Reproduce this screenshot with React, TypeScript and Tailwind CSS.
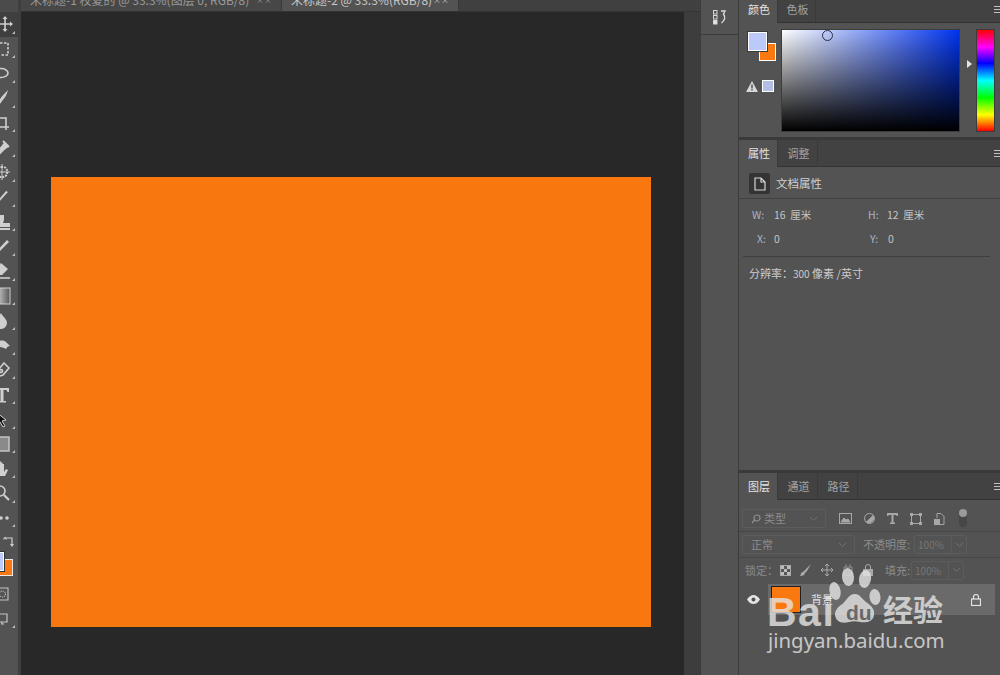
import React from "react";

const F = "font-['Noto_Sans_CJK_SC','Liberation_Sans',sans-serif]";

const Ic = ({ children, w = 18, h = 18, ml = -5 }: { children: React.ReactNode; w?: number; h?: number; ml?: number }) => (
  <svg width={w} height={h} viewBox="0 0 18 18" fill="none" stroke="#cfcfcf" strokeWidth="1.600" style={{ marginLeft: ml, flex: "none" }}>
    {children}
  </svg>
);

const tools: React.ReactNode[] = [
  <><path d="M9 2v14M2 9h14" /><path d="M9 1l2.500 3h-5zM9 17l2.500-3h-5zM1 9l3-2.500v5zM17 9l-3-2.500v5z" fill="#cfcfcf" stroke="none" /></>,
  <rect x="3" y="3" width="12" height="12" strokeDasharray="2.500 1.500" />,
  <><ellipse cx="8" cy="8" rx="7" ry="4.500" /><path d="M4 12l-1 4" /></>,
  <path d="M15 1C12 4 9 7 7 10c-3 0-5 2-5 6 3 0 6-1 7-4 3-3 5-7 6-11z" fill="#cfcfcf" stroke="none" />,
  <><path d="M4 1v12h12M1 4h12v12" /></>,
  <path d="M2 15l6-6 4-5 3 3-5 4-5 5zM10 2l6 6" fill="#cfcfcf" strokeWidth="2" />,
  <><rect x="4" y="4" width="10" height="10" rx="4" strokeDasharray="2 1" strokeWidth="2" /><path d="M9 1v16M1 9h16" strokeWidth="1" /></>,
  <path d="M2 16L13 3l2 1L4 16z" fill="#cfcfcf" stroke="none" />,
  <path d="M6 2h5v5l-1 3h7v4H1v-4h6L6 7zM1 15h16v2H1z" fill="#cfcfcf" stroke="none" />,
  <><path d="M2 15L14 2l2 2L5 15z" fill="#cfcfcf" stroke="none" /><path d="M2 4l6 6M3 17l4-1" strokeWidth="1" strokeDasharray="1 1" /></>,
  <><path d="M8 1l7 6-6 6H5L2 9z" fill="#cfcfcf" stroke="none" /><path d="M1 16h16" /></>,
  <rect x="1" y="1" width="16" height="16" fill="url(#grad)" stroke="#cfcfcf" strokeWidth="1" />,
  <path d="M8 1c2 4 6 6 6 10a6 6 0 0 1-12 0c0-4 4-6 6-10z" fill="#cfcfcf" stroke="none" />,
  <path d="M1 10c2-5 8-7 12-4l4 4c-2 0-3 1-4 3-3-2-8-2-12-3z" fill="#cfcfcf" stroke="none" />,
  <><path d="M11 2l5 5-6 7-6 2 1-7z" /><circle cx="8" cy="10" r="1.500" /></>,
  <path d="M2 2h14v4h-1.500l-1-2H10.500v11H13v1.500H5V15h2.500V4H4.500l-1 2H2z" fill="#cfcfcf" stroke="none" />,
  <path d="M3 2l10 8-4 1 3 5-2 1-3-5-3 3z" fill="#111" stroke="#cfcfcf" strokeWidth="1" />,
  <rect x="2" y="2" width="14" height="14" fill="#8a8a8a" stroke="#c4c4c4" strokeWidth="1.500" />,
  <path d="M5 16C3 13 2 10 1 8l2-1 2 3V3h1.500v5V1.500H8V8 2.500h1.500V9V4H11v8l2-3 2 1-3 6z" fill="#cfcfcf" stroke="none" />,
  <><circle cx="7" cy="7" r="5" /><path d="M11 11l5 5" strokeWidth="2.200" /></>,
  <g fill="#cfcfcf" stroke="none"><circle cx="2" cy="9" r="1.800" /><circle cx="8" cy="9" r="1.800" /><circle cx="14" cy="9" r="1.800" /></g>,
];

const Tool = ({ children, active, corner = true }: { children: React.ReactNode; active?: boolean; corner?: boolean }) => (
  <div className={`relative h-[24.700px] flex items-center shrink-0 ${active ? "bg-[#3f3f3f]" : ""}`}>
    {children}
    {corner && <div className="absolute right-[3px] bottom-[3px] w-0 h-0 border-l-[3px] border-l-transparent border-b-[3px] border-b-[#bdbdbd]" />}
  </div>
);

const Toolbar = () => (
  <div className="w-[18px] shrink-0 bg-[#535353] flex flex-col overflow-hidden relative">
    <div className="h-[12px] shrink-0 bg-[#4b4b4b]" />
    {tools.map((t, i) => (
      <Tool key={i} active={i === 0}>
        <Ic ml={i === 0 ? -4 : -7}>{t}</Ic>
      </Tool>
    ))}
    <div className="h-[19px] mt-[2px] shrink-0 flex items-center">
      <svg width="14" height="14" viewBox="0 0 14 14" fill="none" stroke="#cfcfcf" strokeWidth="1.200" className="ml-[2px]">
        <path d="M3 3h7v7M1.500 4.500L3 2.500l1.500 2M8.500 9L10 11l1.500-2" />
      </svg>
    </div>
    <div className="h-[30px] shrink-0 relative">
      <div className="absolute left-[-8px] top-[1px] w-[12px] h-[19px] bg-[#bccafa] border border-white z-10 outline outline-1 outline-[#333]" />
      <div className="absolute left-[-4px] top-[8px] w-[17px] h-[17px] bg-[#f9780f] border border-[#e8e8e8]" />
    </div>
    <div className="h-[24px] shrink-0 flex items-center mt-[1px]">
      <svg width="10" height="14" viewBox="0 0 10 14" fill="none" stroke="#c4c4c4" strokeWidth="1.100">
        <path d="M0 1h8v12H0" /><circle cx="2.500" cy="7" r="3" strokeDasharray="1 1" />
      </svg>
    </div>
    <Tool>
      <svg width="12" height="14" viewBox="0 0 12 14" fill="none" stroke="#c4c4c4" strokeWidth="1.200" className="ml-[-2px]">
        <path d="M0 2h9v8H0M3 12h3M4 10v2" />
      </svg>
    </Tool>
  </div>
);

const Menu = ({ top }: { top: number }) => (
  <div style={{ marginTop: top }} className="ml-auto w-[6px] h-[7px] flex flex-col justify-between">
    <div className="h-px bg-[#c0c0c0]" />
    <div className="h-px bg-[#c0c0c0]" />
    <div className="h-px bg-[#c0c0c0]" />
  </div>
);

const PanelTabs = ({ tabs, widths }: { tabs: string[]; widths: number[] }) => (
  <div className="h-[27px] shrink-0 bg-[#424242] flex border-b border-[#333] relative">
    {tabs.map((t, i) => (
      <div
        key={t}
        style={{ width: widths[i] }}
        className={`h-[27px] flex items-center justify-center pl-[2px] text-[11px] border-r border-[#3a3a3a] ${F} ${
          i === 0 ? "bg-[#535353] text-[#e4e4e4]" : "text-[#a3a3a3]"
        }`}
      >
        {t}
      </div>
    ))}
    <Menu top={10} />
  </div>
);

const ColorPanel = () => (
  <div className="h-[137px] shrink-0 bg-[#535353] flex flex-col">
    <div className="h-[23px] shrink-0 bg-[#424242] flex border-b border-[#333]">
      <div className={`w-[39px] h-[23px] bg-[#535353] flex items-center justify-center pl-[2px] pb-[4px] text-[11px] text-[#e4e4e4] border-r border-[#3a3a3a] ${F}`}>颜色</div>
      <div className={`w-[38px] flex items-center justify-center pl-[2px] pb-[4px] text-[11px] text-[#a3a3a3] border-r border-[#3a3a3a] ${F}`}>色板</div>
      <Menu top={6} />
    </div>
    <div className="flex pt-[6px] pl-[9px]">
      <div className="w-[34px] shrink-0 flex flex-col">
        <div className="relative h-[32px]">
          <div className="absolute left-[0px] top-[3px] w-[19px] h-[19px] bg-[#bccafa] border border-white outline outline-1 outline-[#3a3a3a] z-10" />
          <div className="absolute left-[11px] top-[14px] w-[17px] h-[18px] bg-[#f9780f] border border-white" />
        </div>
        <div className="flex items-center gap-[4px] mt-[19px] ml-[-2px]">
          <svg width="12" height="11" viewBox="0 0 12 11"><path d="M6 0l6 11H0z" fill="#d8d8d8" /><path d="M5.400 3.500h1.200v4H5.400zM5.400 8.300h1.200v1.200H5.400z" fill="#333" /></svg>
          <div className="w-[12px] h-[12px] bg-[#b2bee6] border border-white" />
        </div>
      </div>
      <div className="relative w-[179px] h-[103px] ml-[-1px] bg-[linear-gradient(to_right,#ffffff,#0033ee)] border border-[#3c3c3c] shrink-0">
        <div className="absolute inset-0 bg-[linear-gradient(to_bottom,rgba(0,0,0,0),#000000)]" />
        <div className="absolute left-[40px] top-[0px] w-[11px] h-[11px] rounded-full border border-[#2b2f45]" />
      </div>
      <div className="w-[16px] shrink-0 flex justify-center">
        <div className="mt-[31px] ml-[2px] w-0 h-0 border-y-[4px] border-y-transparent border-l-[5px] border-l-[#e4e4e4]" />
      </div>
      <div className="w-[19px] h-[103px] shrink-0 bg-[linear-gradient(to_bottom,#ff0000,#ff00ff_17%,#0000ff_33%,#00ffff_50%,#00ff00_67%,#ffff00_84%,#ff0000)] border border-[#3c3c3c]" />
    </div>
  </div>
);

const PropsPanel = () => (
  <div className="flex-1 bg-[#535353] flex flex-col min-h-0">
    <PanelTabs tabs={["属性", "调整"]} widths={[39, 40]} />
    <div className="h-[32px] shrink-0 flex items-center pl-[10px] gap-[6px] pt-[2px] border-b border-[#404040]">
      <div className="w-[21px] h-[21px] bg-[#343434] flex items-center justify-center rounded-[2px]">
        <svg width="12" height="14" viewBox="0 0 12 14" fill="none" stroke="#d8d8d8" strokeWidth="1.200"><path d="M1 1h6l4 4v8H1zM7 1v4h4" /></svg>
      </div>
      <span className={`text-[11.500px] text-[#d0d0d0] ${F}`}>文档属性</span>
    </div>
    <div className={`text-[10.500px] text-[#c4c4c4] ${F}`}>
      <div className="flex h-[24px] mt-[4px] items-center pl-[13px]">
        <span className="w-[22px] text-[#aab4c8]">W:</span><span className="w-[94px] whitespace-pre">16  厘米</span>
        <span className="w-[19px] text-[#aab4c8]">H:</span><span className="whitespace-pre">12  厘米</span>
      </div>
      <div className="flex h-[24px] items-center pl-[18px]">
        <span className="w-[17px] text-[#aab4c8]">X:</span><span className="w-[96px]">0</span>
        <span className="w-[18px] text-[#aab4c8]">Y:</span><span>0</span>
      </div>
      <div className="h-px bg-[#3f3f3f] mx-[4px] mt-[5px] mr-[10px]" />
      <div className="pl-[10px] mt-[8px] text-[11px] text-[#cccccc]">分辨率：<span className="text-[10px]">300</span> 像素 /英寸</div>
    </div>
  </div>
);

const Sel = ({ w, text, icon }: { w: number; text: string; icon?: React.ReactNode }) => (
  <div style={{ width: w }} className={`h-[19px] shrink-0 flex items-center border border-[#5c5c5c] rounded-[2px] px-[8px] text-[11px] text-[#8b8b8b] ${F}`}>
    {icon}
    <span>{text}</span>
    <svg className="ml-auto" width="7" height="4" viewBox="0 0 7 4" fill="none" stroke="#6f6f6f"><path d="M0 0l3.500 3.500L7 0" /></svg>
  </div>
);

const Pct = () => (
  <div className="w-[53px] h-[19px] shrink-0 flex items-center border border-[#5c5c5c] rounded-[2px] text-[10px] text-[#767676]">
    <span className={`w-[37px] pl-[3px] border-r border-[#5c5c5c] h-full flex items-center ${F}`}>100%</span>
    <svg className="ml-[4px]" width="7" height="4" viewBox="0 0 7 4" fill="none" stroke="#6f6f6f"><path d="M0 0l3.500 3.500L7 0" /></svg>
  </div>
);

const LayersPanel = () => (
  <div className="h-[202px] shrink-0 bg-[#535353] flex flex-col">
    <PanelTabs tabs={["图层", "通道", "路径"]} widths={[39, 40, 40]} />
    <div className="h-[32px] shrink-0 flex items-center pl-[3px] pt-[6px] border-b border-[#474747]">
      <Sel w={84} text="类型" icon={
        <svg className="mr-[3px]" width="10" height="10" viewBox="0 0 10 10" fill="none" stroke="#8f8f8f" strokeWidth="1.200"><circle cx="6" cy="4" r="3" /><path d="M3.500 6L1 9" /></svg>
      } />
      <div className="flex items-center ml-[13px] gap-[12px]">
        <svg width="13" height="11" viewBox="0 0 13 11" fill="none" stroke="#a8a8a8"><rect x=".5" y=".5" width="12" height="10" /><path d="M2 9l3-4 2 2 2-1 2 3z" fill="#a8a8a8" /></svg>
        <svg width="11" height="11" viewBox="0 0 11 11"><circle cx="5.500" cy="5.500" r="5" fill="none" stroke="#a8a8a8" /><path d="M9 2A5 5 0 0 1 2 9z" fill="#a8a8a8" /></svg>
        <svg width="11" height="11" viewBox="0 0 11 11"><path d="M0 0h11v3h-1L9 2H6.500v7.500H8V11H3V9.500h1.500V2H2L1 3H0z" fill="#a8a8a8" /></svg>
        <svg width="12" height="12" viewBox="0 0 12 12" fill="none" stroke="#a8a8a8"><rect x="1.500" y="1.500" width="9" height="9" /><g fill="#a8a8a8"><rect x=".5" y=".5" width="2" height="2" /><rect x="9.500" y=".5" width="2" height="2" /><rect x=".5" y="9.500" width="2" height="2" /><rect x="9.500" y="9.500" width="2" height="2" /></g></svg>
        <svg width="11" height="12" viewBox="0 0 11 12" fill="none" stroke="#a8a8a8"><path d="M3 5V.5h4l3 3v8H5" /><rect x=".5" y="6.500" width="5" height="5" fill="#a8a8a8" /></svg>
        <div className="relative w-[8px] h-[16px] rounded-full bg-[#474747] ml-[2px]">
          <div className="absolute left-0 top-[-2px] w-[8px] h-[8px] rounded-full bg-[#9a9a9a]" />
        </div>
      </div>
    </div>
    <div className="h-[26px] shrink-0 flex items-center pl-[3px] border-b border-[#474747]">
      <Sel w={113} text="正常" />
      <span className={`ml-[8px] mr-[4px] text-[11px] text-[#8b8b8b] ${F}`}>不透明度:</span>
      <Pct />
    </div>
    <div className={`h-[26px] shrink-0 flex items-center pl-[6px] pb-[2px] text-[11px] text-[#8b8b8b] ${F}`}>
      <span>锁定：</span>
      <div className="flex items-center gap-[9px] ml-[2px]">
        <svg width="11" height="11" viewBox="0 0 11 11"><rect x=".5" y=".5" width="10" height="10" fill="#565656" stroke="#a8a8a8" /><g fill="#bcbcbc"><rect x="1" y="1" width="3" height="3" /><rect x="7" y="1" width="3" height="3" /><rect x="4" y="4" width="3" height="3" /><rect x="1" y="7" width="3" height="3" /><rect x="7" y="7" width="3" height="3" /></g></svg>
        <svg width="12" height="12" viewBox="0 0 12 12"><path d="M11 0L5 6 3 8c-2 0-2 2-3 4 3 0 5-1 5-3l2-2z" fill="#a9a9a9" /></svg>
        <svg width="12" height="12" viewBox="0 0 12 12" fill="none" stroke="#a9a9a9"><path d="M6 0v12M0 6h12M4 2l2-2 2 2M4 10l2 2 2-2M2 4L0 6l2 2M10 4l2 2-2 2" /></svg>
        <svg width="12" height="12" viewBox="0 0 12 12" fill="none" stroke="#8f8f8f"><path d="M2 3h8v8H2zM4 0v4M8 0v4" /></svg>
        <svg width="10" height="12" viewBox="0 0 10 12"><path d="M2.500 5V3a2.500 2.500 0 0 1 5 0v2" fill="none" stroke="#a9a9a9" /><rect y="5" width="10" height="7" fill="#a9a9a9" /></svg>
      </div>
      <span className="ml-[12px] mr-[1px]">填充:</span>
      <Pct />
    </div>
    <div className="h-[31px] shrink-0 flex items-center">
      <div className="w-[29px] flex justify-center shrink-0">
        <svg width="13" height="9" viewBox="0 0 13 9"><path d="M0 4.500C2 1.500 4 0 6.500 0S11 1.500 13 4.500C11 7.500 9 9 6.500 9S2 7.500 0 4.500z" fill="#e4e4e4" /><circle cx="6.500" cy="4.500" r="2" fill="#535353" /></svg>
      </div>
      <div className="flex-1 h-[31px] bg-[#6a6a6a] flex items-center pl-[3px] mr-[5px]">
        <div className="w-[30px] h-[27px] bg-[#f9780f] border border-[#222]" />
        <span className={`ml-[10px] text-[11px] text-[#e4e4e4] ${F}`}>背景</span>
        <svg className="ml-auto mr-[14px]" width="10" height="12" viewBox="0 0 10 12" fill="none" stroke="#e4e4e4" strokeWidth="1.200"><path d="M2.500 5V3a2.500 2.500 0 0 1 5 0v2" /><rect x=".5" y="5" width="9" height="6.500" /></svg>
      </div>
    </div>
  </div>
);

const Watermark = () => (
  <div className="absolute left-[768px] top-[567px] w-[180px] h-[90px] text-[#e4e4e4] opacity-[0.8] pointer-events-none">
    <svg className="absolute left-[60px] top-[0px]" width="62" height="58" viewBox="0 0 62 58" fill="#e4e4e4">
      <ellipse cx="7" cy="24" rx="5.500" ry="9" transform="rotate(-12 7 24)" />
      <ellipse cx="20" cy="10" rx="6" ry="9" transform="rotate(-6 20 10)" />
      <ellipse cx="37" cy="12" rx="6" ry="9" transform="rotate(10 37 12)" />
      <ellipse cx="47" cy="30" rx="5.500" ry="8" transform="rotate(-8 47 30)" />
      <path d="M27 27c5 0 7 5 11 8 6 4 9 8 8 13-1 7-8 8-14 7-4-1-7-1-11 0-7 2-13 0-14-7 0-5 3-8 6-10 5-3 7-11 14-11z" />
    </svg>
    <span className="absolute left-[-1px] top-[22px] text-[41px] leading-[46px] font-bold font-['Liberation_Sans',sans-serif] tracking-[1.500px]">Bai</span>
    <span className="absolute left-[78px] top-[34px] text-[21px] leading-[24px] font-bold text-[#6a6a6a] font-['Liberation_Sans',sans-serif]">du</span>
    <span className={`absolute left-[115px] top-[23px] text-[30px] leading-[36px] font-bold ${F}`}>经验</span>
    <span className="absolute left-[0px] top-[59px] text-[20.400px] leading-[28px] font-['Noto_Sans',sans-serif] whitespace-nowrap">jingyan.baidu.com</span>
  </div>
);

export default function App() {
  return (
    <div className="relative w-[1000px] h-[675px] flex overflow-hidden bg-[#535353]">
      <svg width="0" height="0" className="absolute">
        <defs>
          <linearGradient id="grad" x1="0" x2="1" y1="0" y2="0">
            <stop offset="0" stopColor="#e8e8e8" />
            <stop offset="1" stopColor="#555" />
          </linearGradient>
        </defs>
      </svg>
      <Toolbar />
      <div className="w-[3px] shrink-0 bg-[#3f3f3f]" />
      <div className="flex-1 flex flex-col min-w-0">
        <div className={`h-[12px] shrink-0 bg-[#404040] flex text-[12px] leading-[14px] overflow-hidden border-b border-[#333] ${F}`}>
          <div className="w-[261px] bg-[#474747] text-[#9a9a9a] pl-[9px] flex justify-between pr-[9px] items-end overflow-hidden whitespace-nowrap border-r border-[#3a3a3a]">
            <span className="mb-[4px]">未标题-1 校夏的 @ 33.3%(图层 0, RGB/8)</span><span className="mb-[4px] text-[8px]">××</span>
          </div>
          <div className="w-[177px] bg-[#535353] text-[#c8c8c8] pl-[9px] pr-[9px] flex justify-between items-end overflow-hidden whitespace-nowrap border-r border-[#3a3a3a]">
            <span className="mb-[4px]">未标题-2 @ 33.3%(RGB/8)</span><span className="mb-[4px] text-[8px]">××</span>
          </div>
        </div>
        <div className="flex-1 flex min-h-0">
          <div className="flex-1 bg-[#282828] pl-[30px] pt-[165px]">
            <div className="w-[600px] h-[450px] bg-[#f8770f]" />
          </div>
          <div className="w-[16px] shrink-0 bg-[#3d3d3d]" />
        </div>
      </div>
      <div className="w-[38px] shrink-0 bg-[#535353] border-l border-[#3c3c3c] flex flex-col">
        <div className="h-[35px] shrink-0 border-b border-[#3c3c3c] flex items-center justify-center">
          <svg width="16" height="16" viewBox="0 0 16 16" fill="none" stroke="#d8d8d8" strokeWidth="1">
            <rect x="1.500" y="1.500" width="3.500" height="3.500" />
            <rect x="1.500" y="6.500" width="3.500" height="3.500" />
            <rect x="1.500" y="11.500" width="3.500" height="3.500" fill="#e4e4e4" />
            <path d="M9 2h4l-1.500 3c2 3 1.500 6-2 9" strokeWidth="1.400" />
          </svg>
        </div>
      </div>
      <div className="w-[262px] shrink-0 border-l border-[#3c3c3c] flex flex-col gap-[3px] bg-[#3a3a3a]">
        <ColorPanel />
        <PropsPanel />
        <LayersPanel />
      </div>
      <Watermark />
    </div>
  );
}
